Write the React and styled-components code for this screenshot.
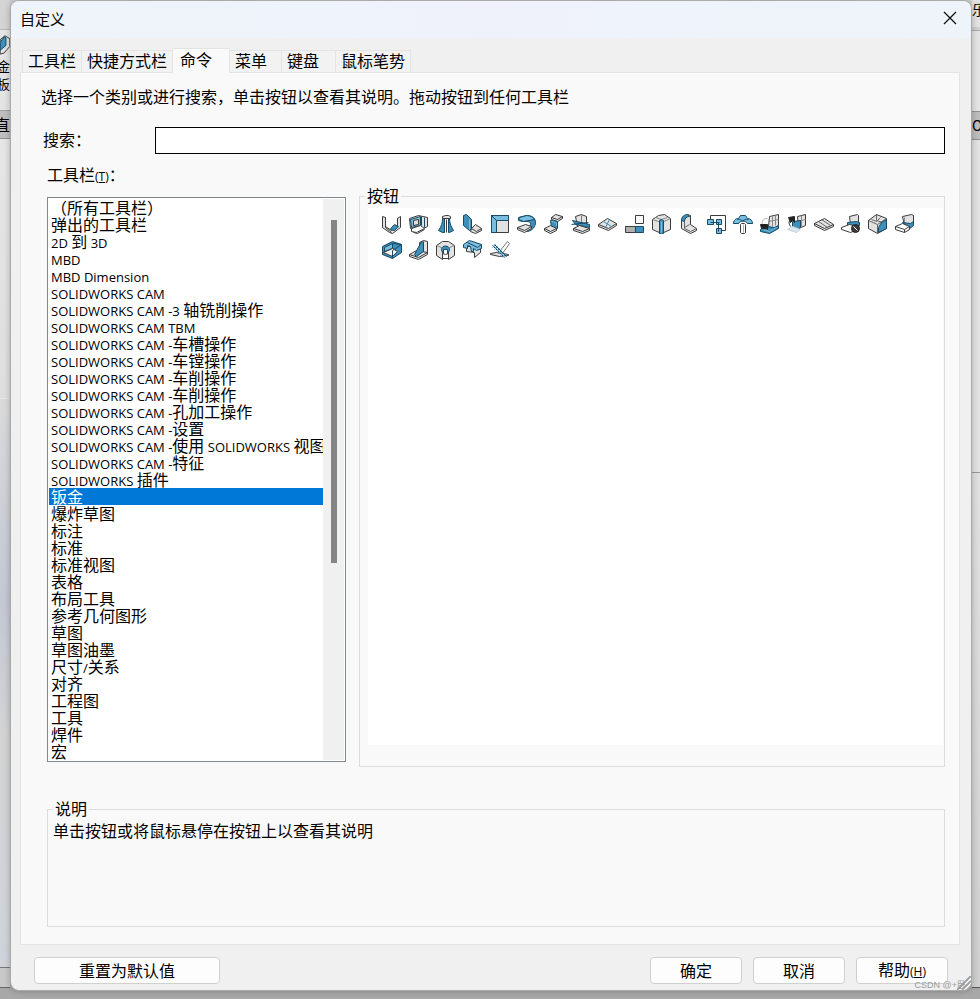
import React, { useState } from "react";
import styled, { createGlobalStyle, css } from "styled-components";

const GlobalStyle = createGlobalStyle`
  * {
    box-sizing: border-box;
  }
  body {
    margin: 0;
    background: #acacac;
  }
  body, button, input {
    font-family: "Open Sans", "Noto Sans CJK SC", sans-serif;
    font-size: 16px;
    color: #000;
  }
`;

const cjkFont = css`
  font-family: "Noto Sans CJK SC", sans-serif;
`;

const lineColor = "#dcdcdc";

const Desktop = styled.div`
  display: grid;
  grid-template-columns: 10px minmax(0, 1fr) 8px;
  min-height: 100vh;
  background: linear-gradient(#d2d2d2, #c4c4c4 60%, #a8a8a8 990px);
  align-items: start;
  ${cjkFont}
`;

const Strip = styled.div`
  display: flex;
  flex-direction: column;
  height: 990px;
  overflow: hidden;
  white-space: nowrap;
`;

const StripBand = styled.div`
  display: flex;
  flex-direction: column;
  flex: 0 0 ${props => props.$size}px;
  line-height: ${props => props.$line || 18}px;
  background: ${props => props.$bg};
  border-bottom: 1px solid ${props => props.$edge || "transparent"};
  overflow: hidden;
`;

const StripText = styled.span`
  font-size: ${props => props.$size || 13}px;
  direction: ${props => (props.$cut ? "rtl" : "ltr")};
`;

const Dialog = styled.section`
  position: relative;
  border: 1px solid #a9a9a9;
  border-radius: 9px;
  background: #f0f0f0;
  box-shadow: 0 0 6px rgba(0, 0, 0, 0.25);
  overflow: hidden;
`;

const TitleBar = styled.header`
  display: flex;
  align-items: center;
  justify-content: space-between;
  height: 37px;
  padding: 0 14px 3px 9px;
  background: linear-gradient(90deg, #eef4f9, #eff2fb 50%, #eef4f9);
`;

const Title = styled.h1`
  margin: 0;
  font-size: 15px;
  font-weight: 400;
`;

const CloseButton = styled.button`
  display: flex;
  padding: 0;
  border: 0;
  background: none;
`;

const Tabs = styled.div`
  display: flex;
  align-items: flex-end;
  height: 24px;
  margin: 10px 11px 0;
`;

const Tab = styled.button`
  width: ${props => props.$width}px;
  height: 22px;
  padding: 0 5px 3px;
  border: 1px solid #e4e4e4;
  border-width: 1px 1px 0 0;
  background: #f2f2f2;
  line-height: 18px;
  text-align: left;
  white-space: nowrap;
  ${cjkFont}

  &:first-child {
    border-left-width: 1px;
  }

  ${props =>
    props.$active &&
    css`
      height: 25px;
      margin-bottom: -1px;
      padding: 0 7px 5px;
      background: #f9f9f9;
      z-index: 1;
    `}
`;

const Panel = styled.div`
  margin: 0 11px 0 9px;
  padding: 11px 0 17px;
  border: 1px solid #e4e4e4;
  background: #f9f9f9;
`;

const Intro = styled.p`
  margin: 0;
  padding: 0 14px 0 20px;
  line-height: 24px;
`;

const SearchRow = styled.div`
  display: flex;
  align-items: center;
  margin-top: 19px;
  padding: 0 14px 0 22px;
`;

const SearchLabel = styled.label`
  flex: 0 0 112px;
  padding-bottom: 3px;
  line-height: 24px;
`;

const SearchInput = styled.input`
  flex: 1;
  min-width: 0;
  height: 27px;
  padding: 0 6px;
  border: 1px solid #000;
  background: #fff;
  outline: 0;
`;

const Columns = styled.div`
  display: grid;
  grid-template-columns: 299px minmax(0, 1fr);
  gap: 13px;
  margin-top: 8px;
  padding: 0 14px 0 26px;
`;

const ListColumn = styled.div`
  display: flex;
  flex-direction: column;
  gap: 11px;
  padding-bottom: 5px;
`;

const ListLabel = styled.span`
  height: 24px;
  line-height: 24px;
`;

const ListBox = styled.div`
  display: flex;
  padding: 1px;
  border: 1px solid #828790;
  background: #fff;
`;

const Options = styled.ul`
  flex: 1;
  min-width: 0;
  margin: 0;
  padding: 0;
  list-style: none;
`;

const Option = styled.li`
  height: 17px;
  padding-left: 2px;
  line-height: 17px;
  white-space: nowrap;
  cursor: default;
  ${props =>
    props.$selected &&
    css`
      background: #0078d7;
      color: #fff;
    `}
`;

const ScrollTrack = styled.div`
  flex: 0 0 21px;
  padding: 21px 7px 0 8px;
  background: #f0f0f0;
`;

const ScrollThumb = styled.div`
  height: 343px;
  background: #858585;
`;

const Latin = styled.span`
  font-family: "Open Sans", sans-serif;
  font-size: 13px;
`;

const Hotkey = styled.span`
  font-family: "Open Sans", sans-serif;
  font-size: 12px;
`;

const Group = styled.fieldset`
  display: flex;
  flex-direction: column;
  min-width: 0;
  margin: ${props => props.$margin};
  padding: ${props => props.$padding};
  border: 1px solid ${lineColor};
`;

const Legend = styled.legend`
  padding: 0 2px 2px;
  line-height: 22px;
`;

const ButtonArea = styled.div`
  flex: 1;
  display: grid;
  grid-template-columns: repeat(auto-fill, 27px);
  grid-auto-rows: 26px;
  align-content: start;
  margin-left: 3px;
  padding: 3px 10px;
  background: #fff;
`;

const CommandButton = styled.button`
  display: flex;
  align-items: center;
  justify-content: center;
  padding: 0;
  border: 0;
  background: none;
`;

const Description = styled.p`
  margin: 0;
  min-height: 105px;
  line-height: 18px;
`;

const Footer = styled.footer`
  display: flex;
  gap: 11px;
  padding: 12px 23px 6px;
`;

const PushButton = styled.button`
  width: ${props => (props.$wide ? 186 : 92)}px;
  height: 27px;
  margin-right: ${props => (props.$wide ? "auto" : 0)};
  padding: 0 0 2px;
  border: 1px solid #d0d0d0;
  border-radius: 4px;
  background: #fdfdfd;
  line-height: 22px;
  ${cjkFont}
`;

const Grip = styled.svg`
  position: absolute;
  right: 0;
  bottom: 0;
`;

const Watermark = styled.span`
  position: absolute;
  right: 5px;
  bottom: -1px;
  font: 9px/12px "Liberation Sans", "Noto Sans CJK SC", sans-serif;
  color: #9c9c9c;
`;

const tabs = [
  { name: "工具栏", width: 60 },
  { name: "快捷方式栏", width: 91 },
  { name: "命令", width: 57 },
  { name: "菜单", width: 52 },
  { name: "键盘", width: 54 },
  { name: "鼠标笔势", width: 75 }
];

const toolbars = [
  "（所有工具栏）",
  "弹出的工具栏",
  "2D 到 3D",
  "MBD",
  "MBD Dimension",
  "SOLIDWORKS CAM",
  "SOLIDWORKS CAM -3 轴铣削操作",
  "SOLIDWORKS CAM TBM",
  "SOLIDWORKS CAM -车槽操作",
  "SOLIDWORKS CAM -车镗操作",
  "SOLIDWORKS CAM -车削操作",
  "SOLIDWORKS CAM -车削操作",
  "SOLIDWORKS CAM -孔加工操作",
  "SOLIDWORKS CAM -设置",
  "SOLIDWORKS CAM -使用 SOLIDWORKS 视图",
  "SOLIDWORKS CAM -特征",
  "SOLIDWORKS 插件",
  "钣金",
  "爆炸草图",
  "标注",
  "标准",
  "标准视图",
  "表格",
  "布局工具",
  "参考几何图形",
  "草图",
  "草图油墨",
  "尺寸/关系",
  "对齐",
  "工程图",
  "工具",
  "焊件",
  "宏"
];

// sheet metal faces: [path, fill, stroke]
const D = "#3c3c3c";
const N = "#174a66";
const B = "#3f8fb8";
const L = "#79bede";
const G = "#e2e2e2";
const M = "#b0b0b0";

const icons = [
  // base flange
  [
    ["M0 2l3 1v9l6 4 6-4V4l3-2v11l-8 6-3-1-7-5z", G, D],
    ["M3 3v10l6 5M15 4v8", "none", D],
    ["M9 13l3-3 4 2-4 4-4-1z", B, N]
  ],
  // convert to sheet metal
  [
    ["M0 4l9-3 9 2v9l-4 2H1z", G, D],
    ["M1 5l10-3v9L2 13z", L, N],
    ["M4 6l5-1v5l-5 1z", G, D],
    ["M12 2v9M15 3v10", "none", N],
    ["M2 14l9-3 4 3-8 4-5-1z", "#fff", D],
    ["M4 18l4 1 7-4", "none", D]
  ],
  // lofted bend
  [
    ["M6 4h2v14H6l-4-2c3-4 4-8 4-12z", B, N],
    ["M12 4h1c0 5 2 9 4 12l-4 2h-1z", B, N],
    ["M6 2l3-1h3l2 1v2H6z", G, D],
    ["M10 5v13", "none", D]
  ],
  // edge flange
  [
    ["M0 1l3-1 5 5v10l-2 1-6-5z", B, N],
    ["M6 5v10", "none", L],
    ["M8 14l4-4 6 4v2l-6 3-5-2z", G, D],
    ["M8 14l5 3 5-3", "none", D]
  ],
  // miter flange
  [
    ["M1 1h17v17H1z", G, D],
    ["M1 1h17v5H6z", L, N],
    ["M1 1l5 5v12H1z", L, N]
  ],
  // hem
  [
    ["M1 3l8-2c6 0 9 3 9 7s-3 8-8 9l-5-2c5 0 8-3 8-6 0-2-3-2-8-2L1 6z", B, N],
    ["M2 3l7-2c4 0 7 2 8 4l-11 2-5-2z", L, N],
    ["M0 13l8-3 6 2v2l-7 4-7-3z", G, D],
    ["M0 13l7 3 7-4", "none", D]
  ],
  // jog
  [
    ["M7 3l4-3 7 2v2l-5 3-6-2z", G, D],
    ["M7 3l6 2 5-3", "none", D],
    ["M6 6l7 1v7l-3 2-3-3z", B, N],
    ["M7 7l5 1v3", "none", L],
    ["M0 14l6-3 6 3v2l-6 3-6-3z", G, D],
    ["M0 14l6 3 6-3", "none", D]
  ],
  // sketched bend
  [
    ["M4 2l6-2 5 2v11l-9-1z", G, D],
    ["M10 1v9", "none", "#777"],
    ["M1 6l13 3 4 1v3l-5-1-9-2z", B, N],
    ["M0 10l17-2", "none", N],
    ["M2 14l6-3 10 3v2l-7 3-9-3z", G, D],
    ["M2 14l9 3 7-3", "none", D]
  ],
  // cross break
  [
    ["M0 10l9-6 9 5v2l-8 5-10-4z", G, D],
    ["M0 10l10 4 8-5", "none", D],
    ["M5 7l8 5M11 5l-4 8", "none", B]
  ],
  // closed corner
  [
    ["M10 1h8v8h-8z", "#fafafa", D],
    ["M0 12h10v6H0z", M, D],
    ["M10 12h8v6h-8z", B, N]
  ],
  // corner
  [
    ["M0 5l6-4 6-1 6 4v11l-9 4-9-4z", G, D],
    ["M0 5l9 3 9-4M3 3l6 2 6-2", "none", "#888"],
    ["M7 6l2-1 2 1v13l-2 1-2-1z", B, N],
    ["M9 7v11", "none", L]
  ],
  // rounded corner
  [
    ["M2 6l6-6 3 1v9l6 4v2l-6 3-9-5z", G, D],
    ["M2 6c0-4 3-6 6-6l2 2c-3 0-5 2-5 5z", B, N],
    ["M5 7v7l6 3 6-3M5 13l5-3", "none", "#666"]
  ],
  // forming layout
  [
    ["M4 5V1h15v15h-4", "none", D],
    ["M1 5h6v5H1zM10 5h5v5h-5zM10 14h5v5h-5z", L, N],
    ["M4 8h9M12 8v9", "none", N]
  ],
  // forming tool
  [
    ["M0 9c0-4 3-5 5-5l2-3h5l2 3c3 0 5 2 5 5h-5c-1-3-8-3-9 0z", L, N],
    ["M4 5c3-1 3 1 5 1s3-2 6-1M0 9h5M14 9h5", "none", N],
    ["M7 10l1-1h3l1 1v8l-1 1H8l-1-1z", "#fff", D],
    ["M10 10v8", "none", M]
  ],
  // fold
  [
    ["M9 2l9-2v11l-4 3-6-2z", G, D],
    ["M12 1v11M15 1v10M8 7l10-2", "none", "#8a8a8a"],
    ["M0 15l5-3 9 1 4-2v3l-9 5-9-2z", B, N],
    ["M2 15l7 2 7-4", "none", L],
    ["M7 4C2 4 1 7 2 11", "none", M],
    ["M0 10h7v5c-1-2-4 0-6-1z", "#222", "#222"]
  ],
  // unfold
  [
    ["M10 2l8-2v11l-7 3z", G, D],
    ["M14 1v11M10 7l8-2", "none", "#8a8a8a"],
    ["M5 7l8-1v7l-3 2-5-3z", B, N],
    ["M0 15l5-3 8 3-4 3z", "#dde8ee", "#c4d2d9"],
    ["M3 12C1 9 1 6 4 5", "none", "#222"],
    ["M1 3l6-1v6L5 6 3 8z", "#222", "#222"]
  ],
  // flatten
  [
    ["M0 9l10-5 9 6v2l-9 4L0 11z", G, D],
    ["M0 9l10 5 9-4", "none", D],
    ["M4 7l9 6M7 5l9 6", "none", "#666"]
  ],
  // no bends
  [
    ["M8 2l8-2 1 1v8l-8 1z", G, D],
    ["M6 8l9-1 3 1v3l-12 1z", B, N],
    ["M0 13l8-3 8 2v3l-7 3-9-3z", "#fff", D],
    ["M10 14a4 4 0 1 0 8 0a4 4 0 1 0-8 0z", "#3a3a3a", "#222"],
    ["M12 12l4 4", "none", "#fff"]
  ],
  // rip
  [
    ["M0 6l8-6 10 4v10l-9 5-9-5z", G, D],
    ["M0 6l9 4 9-6M9 10v9M8 0v6l9 3M3 5l5 2 4-4", "none", "#666"],
    ["M10 13l3-5 5-3v9l-8 4z", B, N]
  ],
  // insert bends
  [
    ["M7 2l9-2 2 1v8l-9 2z", G, D],
    ["M9 3v7", "none", "#888"],
    ["M7 8l8 1 3-2v4l-6 5-1-5z", B, N],
    ["M0 12l7-3 7 3v3l-5 3-9-3z", "#fff", D],
    ["M0 12l9 3 5-3M9 15v3", "none", D]
  ],
  // swept flange
  [
    ["M0 6l10-5 9 3v8l-9 6-10-4z", B, N],
    ["M2 7l8-4v5l-8 3z", L, N],
    ["M1 12l9-4 5 3-5 5z", "#f4f4f4", D],
    ["M10 3l9 1-9 6v8", "none", N]
  ],
  // gusset
  [
    ["M10 2l4-2 4 1v11l-7 1z", G, D],
    ["M14 1v11", "none", D],
    ["M0 14l7-4 11 2v2l-9 5-9-3z", G, D],
    ["M0 14l9 3 9-5", "none", D],
    ["M5 14L12 1l2 1v9l-7 5z", B, N]
  ],
  // vent
  [
    ["M0 5l6-4h6l6 4v10l-6 4V8H6v11l-6-4z", G, D],
    ["M0 5l5 2M18 5l-5 2", "none", "#888"],
    ["M5 10c-1-6 9-6 8 0l-2 3V9H7v4z", B, N],
    ["M6 13l3 1 3-1v5H6z", "#fff", D]
  ],
  // tab and slot
  [
    ["M3 6h14v6l-6 5v-5l-8-1z", G, D],
    ["M0 4l6-4 12 4v4l-5 2-3-2v3H8L7 6 4 5v3L0 7z", L, N],
    ["M4 2l10 5 4-3", "none", N]
  ],
  // normal cut
  [
    ["M9 11l8-10 2 2-7 10z", "#fff", "#777"],
    ["M0 13l6-1 12 2v1l-9 1-9-2z", G, D],
    ["M2 5l12 12M4 4l12 12", "none", N],
    ["M3 5l12 12", "none", L],
    ["M2 7l3-3M4 9l3-3M6 11l3-3M8 13l3-3M10 15l3-3M12 17l3-3", "none", B]
  ]
];

// integer coordinates fall on pixel centres
const CommandIcon = ({ faces }) => (
  <svg width="20" height="20" viewBox="-0.5 -0.5 20 20" aria-hidden="true">
    {faces.map(([d, fill, stroke], i) => (
      <path key={i} d={d} fill={fill} stroke={stroke} strokeLinejoin="round" />
    ))}
  </svg>
);

// latin runs are set smaller than the chinese ones
const MixedText = ({ text }) =>
  text
    .split(/([\x20-\x7e]+)/)
    .filter(Boolean)
    .map((part, i) =>
      /^[\x20-\x7e]/.test(part) ? <Latin key={i}>{part}</Latin> : part
    );

const App = () => {
  const [tab, setTab] = useState("命令");
  const [selected, setSelected] = useState(17);
  const [query, setQuery] = useState("");

  return (
    <>
      <GlobalStyle />
      <Desktop>
        <Strip>
          <StripBand $size={30} $bg="#d4d4d4" $edge="#b8b8b8" />
          <StripBand $size={27} $bg="#e6e6e6">
            <svg width="10" height="27" viewBox="0 0 10 27">
              <path d="M0 10l5-4 5 3v8l-6 7-4 1z" fill={G} stroke={D} />
              <path d="M0 13l4-6 2 1v8l-6 5z" fill={B} stroke={N} />
            </svg>
          </StripBand>
          <StripBand $size={54} $bg="#e4e4e4" $edge="#a0a0a0">
            <StripText $cut>金</StripText>
            <StripText $cut>板</StripText>
          </StripBand>
          <StripBand $size={28} $line={26} $bg="#bfbfbf" $edge="#909090">
            <StripText $size={16} $cut>
              直
            </StripText>
          </StripBand>
          <StripBand $size={260} $bg="linear-gradient(#e6e6e6, #dedede)" />
          <StripBand
            $size={569}
            $bg="linear-gradient(#dadada, #c4c8d4 35%, #d4d4d4 60%, #d0d4da)"
            $edge="#777"
          />
          <StripBand $size={20} $bg="#c8c8c8" $edge="#666" />
        </Strip>

        <Dialog role="dialog" aria-labelledby="dialog-title">
          <TitleBar>
            <Title id="dialog-title">自定义</Title>
            <CloseButton aria-label="关闭">
              <svg width="14" height="14" viewBox="0 0 14 14">
                <path d="M1 1l12 12M13 1L1 13" stroke="#111" strokeWidth="1.3" />
              </svg>
            </CloseButton>
          </TitleBar>

          <Tabs role="tablist">
            {tabs.map(({ name, width }) => (
              <Tab
                key={name}
                role="tab"
                aria-selected={tab === name}
                $active={tab === name}
                $width={width}
                onClick={() => setTab(name)}
              >
                {name}
              </Tab>
            ))}
          </Tabs>

          <Panel role="tabpanel">
            <Intro>
              选择一个类别或进行搜索，单击按钮以查看其说明。拖动按钮到任何工具栏
            </Intro>
            <SearchRow>
              <SearchLabel htmlFor="search">搜索：</SearchLabel>
              <SearchInput
                id="search"
                value={query}
                onChange={e => setQuery(e.target.value)}
              />
            </SearchRow>

            <Columns>
              <ListColumn>
                <ListLabel id="toolbars-label">
                  工具栏
                  <Hotkey>
                    (<u>T</u>)
                  </Hotkey>
                  ：
                </ListLabel>
                <ListBox>
                  <Options role="listbox" aria-labelledby="toolbars-label">
                    {toolbars.map((name, i) => (
                      <Option
                        key={i}
                        role="option"
                        aria-selected={selected === i}
                        $selected={selected === i}
                        onClick={() => setSelected(i)}
                      >
                        <MixedText text={name} />
                      </Option>
                    ))}
                  </Options>
                  <ScrollTrack>
                    <ScrollThumb />
                  </ScrollTrack>
                </ListBox>
              </ListColumn>

              <Group $margin="22px 0 0" $padding="0 1px 21px 5px">
                <Legend>按钮</Legend>
                <ButtonArea>
                  {icons.map((faces, i) => (
                    <CommandButton key={i}>
                      <CommandIcon faces={faces} />
                    </CommandButton>
                  ))}
                </ButtonArea>
              </Group>
            </Columns>

            <Group $margin="30px 14px 0 26px" $padding="0 5px">
              <Legend>说明</Legend>
              <Description>单击按钮或将鼠标悬停在按钮上以查看其说明</Description>
            </Group>
          </Panel>

          <Footer>
            <PushButton $wide>重置为默认值</PushButton>
            <PushButton>确定</PushButton>
            <PushButton>取消</PushButton>
            <PushButton>
              帮助
              <Hotkey>
                (<u>H</u>)
              </Hotkey>
            </PushButton>
          </Footer>
          <Grip width="14" height="14" viewBox="0 0 14 14" aria-hidden="true">
            <path d="M0 14L14 0M5 14l9-9M10 14l4-4" stroke="#a0a0a0" strokeWidth="2" />
            <path d="M2 14L14 2M7 14l7-7" stroke="#fff" />
          </Grip>
          <Watermark>CSDN @+卧</Watermark>
        </Dialog>

        <Strip>
          <StripBand $size={27} $bg="#e2e2e2">
            <StripText $size={14}>乐</StripText>
          </StripBand>
          <StripBand $size={4} $bg="#cfcfcf" $edge="#aaa" />
          <StripBand $size={81} $bg="#e4e4e4" $edge="#909090" />
          <StripBand $size={28} $line={26} $bg="#bdbdbd" $edge="#909090">
            <StripText $size={14}>O</StripText>
          </StripBand>
          <StripBand $size={333} $bg="#e2e2e2" $edge="#999" />
          <StripBand $size={515} $bg="linear-gradient(#e0e0e0, #cfcfcf)" $edge="#555" />
        </Strip>
      </Desktop>
    </>
  );
};

export default App;
